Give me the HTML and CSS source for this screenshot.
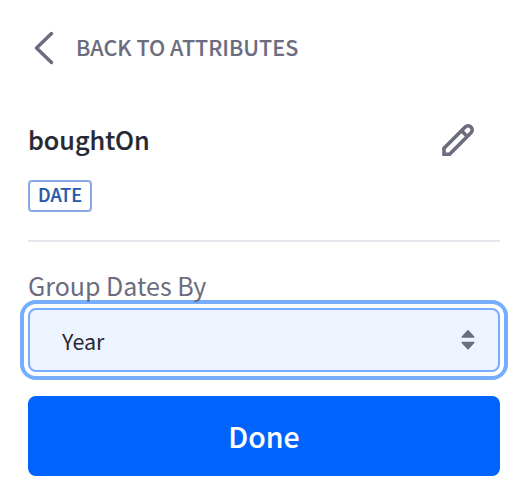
FILE: index.html
```html
<!DOCTYPE html>
<html lang="en">
<head>
<meta charset="utf-8">
<title>Attribute</title>
<link rel="stylesheet" href="styles.css">
</head>
<body>
<main class="panel">
  <a class="back">
    <svg class="back-icon" width="20" height="34" viewBox="0 0 20 34"><path d="M17.500 2.500 2.500 17 17.500 31.500"/></svg>
    <span>BACK TO ATTRIBUTES</span>
  </a>
  <header class="attribute">
    <h1 class="name">boughtOn</h1>
    <svg class="edit-icon" width="34" height="34" viewBox="0 0 34 34"><path d="M3 31.200v-6L24.200 4a4 4 0 0 1 5.800 5.800L8.600 31.200Z"/><path d="m20.500 7.700 5.800 5.800"/></svg>
  </header>
  <span class="tag">DATE</span>
  <hr class="rule">
  <label class="label">Group Dates By</label>
  <div class="select" tabindex="0">
    <span>Year</span>
    <svg class="sort-icon" width="16" height="22" viewBox="0 0 16 22"><path d="M2.200 8 8 1.700 13.800 8ZM2.200 13.500 8 19.800 13.800 13.500Z"/></svg>
  </div>
  <button class="done" type="button">Done</button>
</main>
</body>
</html>
```
FILE: styles.css
```css
* { box-sizing: border-box; }

body {
  margin: 0;
  background: #fff;
  color: #272833;
  font-family: "Source Sans Pro", "Noto Sans CJK JP", sans-serif;
}

.panel {
  display: flex;
  flex-direction: column;
  align-items: stretch;
  padding: 28px;
}

.back {
  display: flex;
  align-items: center;
  gap: 22px;
  height: 40px;
  padding-left: 6px;
  color: #6b6c7e;
  font-size: 21.500px;
  font-weight: 500;
  line-height: 38px;
  -webkit-text-stroke: 0.1px currentColor;
}

.back span {
  height: 40px;
}

.back-icon {
  fill: none;
  stroke: #6b6c7e;
  stroke-width: 3.500;
  stroke-linecap: round;
  stroke-linejoin: round;
}

.attribute {
  display: flex;
  align-items: center;
  justify-content: space-between;
  height: 48px;
  margin-top: 48px;
  padding-right: 25px;
}

.name {
  height: 48px;
  margin: 0;
  font-size: 25.200px;
  font-weight: 500;
  line-height: 46px;
  -webkit-text-stroke: 0.2px currentColor;
}

.edit-icon {
  fill: none;
  stroke: #6b6c7e;
  stroke-width: 3.600;
}

.tag {
  align-self: flex-start;
  height: 32px;
  margin-top: 16px;
  padding: 0 8px;
  border: 2px solid #89a7e0;
  border-radius: 4px;
  color: #2558aa;
  font-size: 18px;
  font-weight: 500;
  line-height: 25px;
  -webkit-text-stroke: 0.2px currentColor;
}

.rule {
  width: 100%;
  height: 2px;
  margin: 28px 0 30px;
  border: 0;
  background: #e7e7ed;
}

.label {
  position: relative;
  z-index: 1;
  height: 36px;
  color: #6b6c7e;
  font-size: 25px;
  line-height: 26px;
}

.select {
  display: flex;
  align-items: center;
  justify-content: space-between;
  height: 64px;
  padding: 0 22px 0 32px;
  border: 2px solid #75adff;
  border-radius: 8px;
  outline: 0;
  background: #edf4ff;
  box-shadow: 0 0 0 4px #fff, 0 0 0 8px #75adff;
  font-size: 21.500px;
  line-height: 60px;
}

.select span {
  height: 60px;
  line-height: 62px;
}

.sort-icon {
  fill: #6b6c7e;
  stroke: #6b6c7e;
  stroke-width: 1.500;
  stroke-linejoin: round;
}

.done {
  height: 80px;
  margin-top: 24px;
  padding: 0;
  border: 0;
  border-radius: 8px;
  background: #0063fb;
  color: #fff;
  font-family: inherit;
  font-size: 28.500px;
  font-weight: 500;
  line-height: 80px;
  -webkit-text-stroke: 0.1px currentColor;
}
```
